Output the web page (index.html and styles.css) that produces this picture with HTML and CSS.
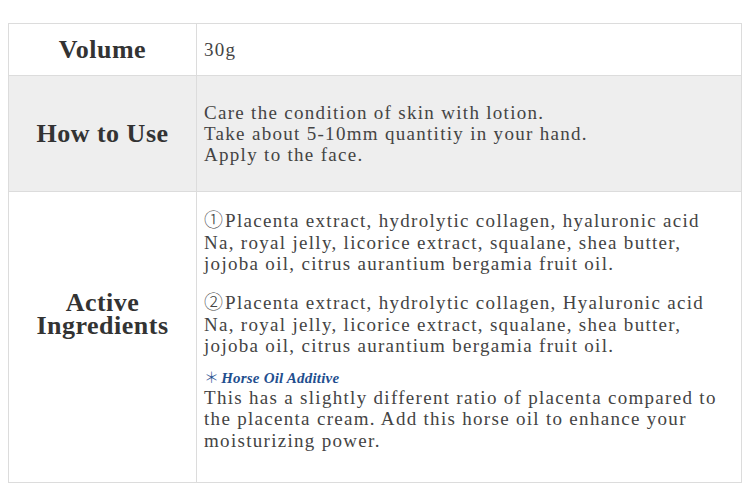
FILE: index.html
```html
<!DOCTYPE html>
<html>
<head>
<meta charset="utf-8">
<link rel="stylesheet" href="styles.css">
</head>
<body>
<table class="spec">
  <tr class="row-volume">
    <th class="label">Volume</th>
    <td class="value">30g</td>
  </tr>
  <tr class="row-use">
    <th class="label">How to Use</th>
    <td class="value">Care the condition of skin with lotion.<br>Take about 5-10mm quantitiy in your hand.<br>Apply to the face.</td>
  </tr>
  <tr class="row-ing">
    <th class="label label-ing">Active<br>Ingredients</th>
    <td class="value value-ing">
      <p class="para"><span class="num">①</span>Placenta extract, hydrolytic collagen, hyaluronic acid Na, royal jelly, licorice extract, squalane, shea butter, jojoba oil, citrus aurantium bergamia fruit oil.</p>
      <p class="para"><span class="num">②</span>Placenta extract, hydrolytic collagen, Hyaluronic acid Na, royal jelly, licorice extract, squalane, shea butter, jojoba oil, citrus aurantium bergamia fruit oil.</p>
      <p class="note-title"><span class="star">＊</span>Horse Oil Additive</p>
      <p class="note">This has a slightly different ratio of placenta compared to the placenta cream. Add this horse oil to enhance your moisturizing power.</p>
    </td>
  </tr>
</table>
</body>
</html>
```

FILE: styles.css
```css
html, body {
  margin: 0;
  padding: 0;
  background: #fff;
}
body {
  padding: 23px 8px 0 8px;
  font-family: "Liberation Serif", "Times New Roman", serif;
}
.spec {
  border-collapse: collapse;
  width: 734px;
  table-layout: fixed;
}
.spec th, .spec td {
  border: 1px solid #dcdcdc;
  padding: 0;
}
.label {
  width: 188px;
  box-sizing: border-box;
  font-size: 26px;
  font-weight: bold;
  color: #333;
  text-align: center;
  vertical-align: middle;
  line-height: 23px;
  letter-spacing: 0.5px;
}
.value {
  font-size: 19px;
  line-height: 21px;
  color: #444;
  letter-spacing: 1.3px;
  padding-left: 7px !important;
  padding-right: 12px !important;
  vertical-align: middle;
  text-align: left;
}
.row-volume {
  height: 52px;
}
.row-use {
  height: 116px;
  background: #eeeeee;
}
.row-ing .label-ing {
  padding-bottom: 46px;
}
.value-ing {
  padding-top: 18px !important;
  padding-bottom: 31px !important;
  vertical-align: top;
  line-height: 21.5px;
}
.num {
  font-family: "Noto Sans CJK JP", sans-serif;
  font-weight: 300;
  letter-spacing: 0;
  font-size: 19px;
  line-height: 0;
  margin-right: 2px;
}
.para {
  margin: 0 0 17.5px 0;
}
.para + .para {
  margin-bottom: 12px;
}
.note-title {
  margin: 0;
  font-size: 15px;
  line-height: 18px;
  font-style: italic;
  font-weight: bold;
  color: #1f4f8f;
  letter-spacing: 0.2px;
}
.star {
  font-family: "Noto Sans CJK JP", sans-serif;
  font-style: normal;
  font-weight: 300;
  line-height: 0;
  margin-right: 2px;
}
.note {
  margin: 0;
}
```
